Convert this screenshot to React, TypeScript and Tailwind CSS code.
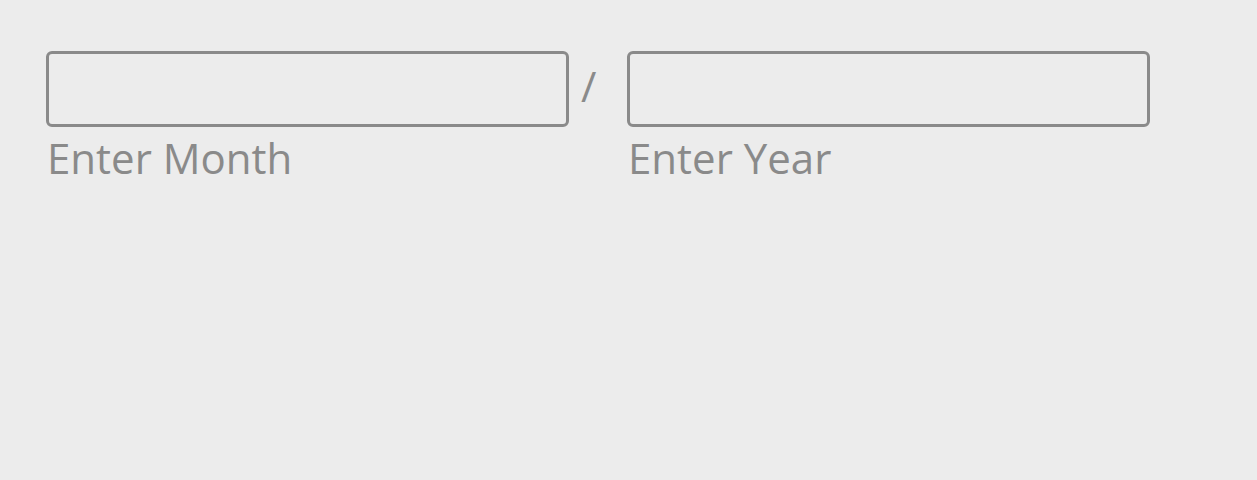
export default function App() {
  return (
    <div className="w-[1257px] h-[480px] bg-[#ececec] pl-[46px] pt-[51px]" style={{ fontFamily: '"Open Sans", sans-serif' }}>
      <div className="flex">
        <div className="flex flex-col w-[523px]">
          <input className="h-[76px] w-[523px] border-[3px] border-[#8a8a8a] rounded-[6px] bg-transparent outline-none" />
          <label className="mt-[7px] text-[42px] leading-[48px] text-[#8a8a8a] pl-[1px]">Enter Month</label>
        </div>
        <div className="w-[58px] flex justify-start pl-[12px]">
          <span className="mt-[11px] text-[42px] leading-[48px] text-[#8a8a8a] h-[48px]">/</span>
        </div>
        <div className="flex flex-col w-[523px]">
          <input className="h-[76px] w-[523px] border-[3px] border-[#8a8a8a] rounded-[6px] bg-transparent outline-none" />
          <label className="mt-[7px] text-[42px] leading-[48px] text-[#8a8a8a] pl-[1px]">Enter Year</label>
        </div>
      </div>
    </div>
  );
}
